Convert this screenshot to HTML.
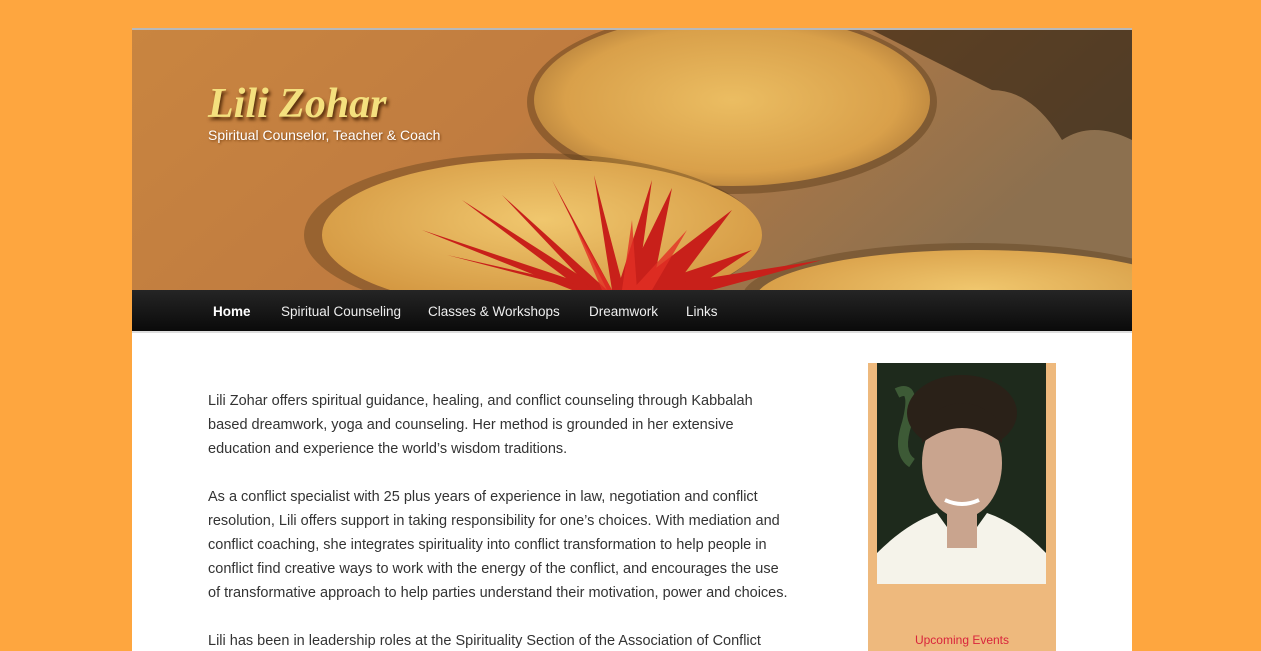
<!DOCTYPE html>
<html style="width:1261px;height:651px;overflow:hidden"><head><meta charset="utf-8"><style>
*{margin:0;padding:0;box-sizing:border-box}
body{width:1261px;height:651px;overflow:hidden;background:#fea63f;font-family:"Liberation Sans",Arial,sans-serif;position:relative}
#page{position:absolute;left:132px;top:28px;width:1000px;height:623px;background:#fff;border-top:2px solid #b8b8b8;overflow:hidden}
#hdr{position:absolute;left:0;top:0;width:1000px;height:260px;overflow:hidden}
#title{position:absolute;left:76px;top:50px;font-family:"Liberation Serif",serif;font-style:italic;font-weight:bold;font-size:42px;color:#f4e07e;text-shadow:2px 3px 3px #5a300c}
#tag{position:absolute;left:76px;top:97px;font-size:14px;color:#fff;text-shadow:1px 1px 2px #7a4010}
#nav{position:absolute;left:0;top:260px;width:1000px;height:43px;background:linear-gradient(#252525,#0a0a0a);border-bottom:2px solid #ddd}
#nav a{position:absolute;top:14px;color:#eee;font-size:13.5px;text-decoration:none}
#main{position:absolute;left:76px;top:359px;font-size:14.5px;line-height:24px;color:#333;width:620px}
#main p{margin-bottom:24px}
#side{position:absolute;left:736px;top:333px;width:188px;height:320px;background:#eeb97d}
#photo{position:absolute;left:9px;top:0;width:169px;height:221px;overflow:hidden}
#ev{position:absolute;left:0;top:270px;width:188px;text-align:center;font-size:12px;color:#d9243c}
</style></head><body>
<div id="page">
<div id="hdr">
<svg width="1000" height="260" viewBox="0 0 1000 260">
<defs>
<linearGradient id="bg" x1="0" y1="0" x2="1" y2="0.3"><stop offset="0" stop-color="#c98540"/><stop offset="0.45" stop-color="#c07c40"/><stop offset="1" stop-color="#8c704f"/></linearGradient>
<radialGradient id="pad" cx="0.5" cy="0.5" r="0.6"><stop offset="0" stop-color="#ebbd62"/><stop offset="0.7" stop-color="#d9a04a"/><stop offset="1" stop-color="#a87436"/></radialGradient>
<radialGradient id="pad2" cx="0.5" cy="0.4" r="0.6"><stop offset="0" stop-color="#f0c76e"/><stop offset="1" stop-color="#d39640"/></radialGradient>
</defs>
<rect width="1000" height="260" fill="url(#bg)"/>
<path d="M740 0 L1000 0 L1000 110 Q960 90 930 110 Q900 60 860 60 Q800 30 740 0Z" fill="#2a1a0c" opacity="0.6"/>
<ellipse cx="600" cy="72" rx="205" ry="92" fill="#5a3c18" opacity="0.45"/>
<ellipse cx="600" cy="70" rx="198" ry="86" fill="url(#pad)"/>
<ellipse cx="400" cy="205" rx="228" ry="82" fill="#5a3c18" opacity="0.4"/>
<ellipse cx="410" cy="205" rx="220" ry="76" fill="url(#pad2)"/>
<ellipse cx="840" cy="268" rx="230" ry="55" fill="#5a3c18" opacity="0.4"/>
<ellipse cx="845" cy="270" rx="222" ry="50" fill="url(#pad2)"/>
<g fill="#c8201a">
<path d="M470 260 L290 200 L440 260Z"/>
<path d="M470 260 L315 225 L450 260Z"/>
<path d="M470 260 L330 170 L450 260Z"/>
<path d="M475 260 L370 165 L460 260Z"/>
<path d="M480 260 L420 150 L475 260Z"/>
<path d="M480 260 L462 145 L492 260Z"/>
<path d="M485 260 L520 150 L505 260Z"/>
<path d="M490 260 L540 158 L520 260Z"/>
<path d="M495 260 L600 180 L540 260Z"/>
<path d="M500 260 L620 220 L560 260Z"/>
<path d="M500 260 L690 230 L580 260Z"/>
</g>
<g fill="#e33025" opacity="0.8">
<path d="M480 260 L440 190 L470 260Z"/>
<path d="M500 260 L555 200 L520 260Z"/>
<path d="M490 260 L500 190 L505 260Z"/>
</g>
</svg>
<div id="title">Lili Zohar</div>
<div id="tag">Spiritual Counselor, Teacher &amp; Coach</div>
</div>
<div id="nav">
<a style="left:81px;font-weight:bold;color:#fff">Home</a>
<a style="left:149px">Spiritual Counseling</a>
<a style="left:296px">Classes &amp; Workshops</a>
<a style="left:457px">Dreamwork</a>
<a style="left:554px">Links</a>
</div>
<div id="main">
<p>Lili Zohar offers spiritual guidance, healing, and conflict counseling through Kabbalah<br>based dreamwork, yoga and counseling. Her method is grounded in her extensive<br>education and experience the world’s wisdom traditions.</p>
<p>As a conflict specialist with 25 plus years of experience in law, negotiation and conflict<br>resolution, Lili offers support in taking responsibility for one’s choices. With mediation and<br>conflict coaching, she integrates spirituality into conflict transformation to help people in<br>conflict find creative ways to work with the energy of the conflict, and encourages the use<br>of transformative approach to help parties understand their motivation, power and choices.</p>
<p>Lili has been in leadership roles at the Spirituality Section of the Association of Conflict</p>
</div>
<div id="side">
<div id="photo">
<svg width="169" height="221" viewBox="0 0 169 221">
<rect width="169" height="221" fill="#1e2a1c"/>
<path d="M20 30 Q40 20 30 60 Q20 90 35 100" stroke="#3d5a36" stroke-width="10" fill="none"/>
<ellipse cx="85" cy="50" rx="55" ry="38" fill="#2a2118"/>
<ellipse cx="85" cy="100" rx="40" ry="55" fill="#c9a48e"/>
<path d="M45 60 Q85 20 125 60 L125 80 Q85 50 45 80Z" fill="#2a2118"/>
<path d="M68 137 Q85 145 102 137" stroke="#fff" stroke-width="4" fill="none"/>
<path d="M0 190 Q30 160 60 150 L85 185 L110 150 Q140 160 169 190 L169 221 L0 221Z" fill="#f5f3ea"/>
<rect x="70" y="145" width="30" height="40" fill="#c9a48e"/>
</svg>
</div>
<div id="ev">Upcoming Events</div>
</div>
</div>
</body></html>
